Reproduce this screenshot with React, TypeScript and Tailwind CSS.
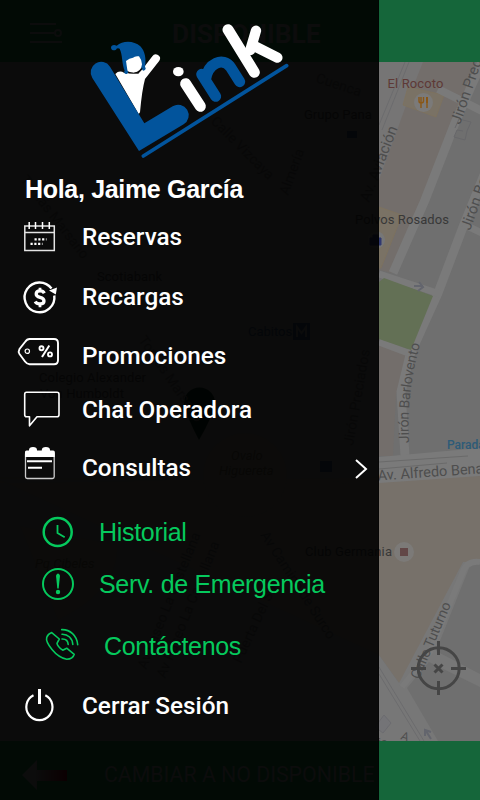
import type { ReactNode } from "react";

function StreetMap() {
  return (
    <svg viewBox="0 62 480 679" className="block h-[679px] w-full" fontFamily="Roboto, sans-serif">
      <rect y="62" width="480" height="679" fill="#6f6f6f" />
      {/* blocks */}
      <path d="M379 62H476L392 273L379 270Z" fill="#736e6b" />
      <path d="M379 62H423L408 100L379 180Z" fill="#767575" />
      <path d="M408 87L444 95L436 117L403 105Z" fill="#7a7265" stroke="#80725c" strokeWidth=".7" />
      <path d="M379 207L402 215L381 268H379Z" fill="#7a7265" stroke="#80725c" strokeWidth=".7" />
      <path d="M379 345L409 355L396 395L393 456H379Z" fill="#736e6b" />
      <path d="M0 483L480 476V562L463 562L428 655L399 683L379 655L0 480Z" fill="#77716a" />
      <path d="M379 655L399 683L463 562H480V741H379Z" fill="#777" />
      <path d="M469 568Q472 563 480 564V674L436 651Z" fill="#6f6f6f" />
      <path d="M407 688L429 662L480 687V741H438Z" fill="#6f6f6f" />
      <path d="M384 715L391 723L383 733L375 727Z" fill="#747477" stroke="#6c6c70" />
      {/* roads */}
      <g fill="none" stroke="#7a7a7a" strokeWidth="9">
        <path d="M485 55L455 123L425 200L393 273" />
        <path d="M438 89L484 112" strokeWidth="8" />
        <path d="M484 175L463 227L438 293L410 355L401 392L405 456" />
        <path d="M463 224L484 234M379 274L440 294M379 342L411 354" strokeWidth="7" />
        <path d="M480 562Q466 560 462 574L430 652L402 687" strokeWidth="6" />
      </g>
      <path d="M379 457L480 448V476L379 483Z" fill="#7a7a7a" />
      <path d="M379 462L468 456M379 469L447 463" stroke="#6a6a6a" />
      <path d="M405 62L379 125M409 62L382 130M379 667L424 741M379 674L420 741" stroke="#6c6c6e" fill="none" />
      <path d="M384 278L433 296L411 350L379 339V282Z" fill="#637055" />
      <path d="M0 478L379 483" stroke="#7a7265" />
      <path d="M414 286H423M419 282L423 287L418 291M431 739L426 731M425 736L425 730L431 732" stroke="#63656d" strokeWidth="2" fill="none" />
      <path d="M455 128L459 119L471 122L467 131L465 140L454 137L457 130L463 131" fill="none" stroke="#67676a" />
      {/* places */}
      <circle cx="423.500" cy="102.500" r="9.500" fill="#7b7a79" />
      <path d="M419 97V101Q419 103 421 103V108M421 97V103M423.500 97V101Q423.500 103 421 103M427 97V108" fill="none" stroke="#8a5716" strokeWidth="1.400" />
      <path d="M426 97H428V103H426Z" fill="#8a5716" />
      <circle cx="376" cy="240" r="9" fill="#777" />
      <path d="M370 238H381V245H370ZM373 238V235H378V238" fill="#303971" stroke="#303971" />
      <circle cx="404" cy="552" r="10" fill="#7c7a78" />
      <path d="M400 548H408V556H400Z" fill="#624747" />
      <path d="M184 403A15.500 15.500 0 0 1 215 403Q212 418 199 440Q187 418 184 403Z" fill="#092415" />
      <circle cx="245" cy="475" r="42" fill="#77716a" />
      <path d="M293 323H310V340H293ZM320 461H332V472H320ZM347 131H357V138H347Z" fill="#2b3f5c" />
      <path d="M297 337V327L301.500 333L306 327V337" fill="none" stroke="#6f6f6f" strokeWidth="2" />
      <path d="M20 526L58 620Q120 590 117 545Z" fill="#77716a" />
      <g fontSize="13">
        <text x="387.500" y="88" fill="#5e3936" textLength="56">El Rocoto</text>
        <text x="355" y="224" fill="#383838" textLength="94">Polvos Rosados</text>
        <text x="305" y="556" fill="#383838" textLength="87">Club Germania</text>
        <text x="447" y="449" fill="#2d5b78" fontSize="12" fontWeight="500">Parada</text>
        <text x="304" y="119" fill="#383838">Grupo Pana</text>
        <text x="97" y="281" fill="#383838" textLength="65">Scotiabank</text>
        <text x="39" y="382" fill="#383838" textLength="107">Colegio Alexander</text>
        <text x="40" y="397.500" fill="#383838" textLength="84">Von Humboldt</text>
        <text x="248" y="336" fill="#2b3f5c">Cabitos</text>
        <g fontStyle="italic" fill="#514938">
          <text x="231" y="460">Ovalo</text>
          <text x="219" y="475">Higuereta</text>
          <text x="35" y="568">Pq Cibeles</text>
        </g>
      </g>
      <path id="barlovento" d="M409 443Q406 390 422 338" fill="none" />
      <g fill="#4e4e4e" fontSize="15">
        <text transform="translate(369 203) rotate(-69)" textLength="80">Av. Aviación</text>
        <text transform="translate(460 125) rotate(-71)">Jirón Preciados</text>
        <text transform="translate(470 231) rotate(-70)">Jirón Barlovento</text>
        <text fontSize="14"><textPath href="#barlovento" textLength="100">Jirón Barlovento</textPath></text>
        <text transform="translate(378 480.500) rotate(-4)" fontSize="14.500">Av. Alfredo Benavides</text>
        <text transform="translate(419 680) rotate(-67)" fontSize="14" textLength="82">Calle Tuturno</text>
        <text x="378" y="747" fontSize="12">is</text>
        <text transform="translate(400 739) rotate(20)" fontSize="12">A</text>
      </g>
      <g fill="#4e4e4e" fontSize="14">
        <text transform="translate(210 122) rotate(45)">Calle Vizcaya</text>
        <text transform="translate(288 196) rotate(-70)">Almería</text>
        <text transform="translate(315 82) rotate(18)">Cuenca</text>
        <text transform="translate(353 446) rotate(-80)">Jirón Preciados</text>
        <text transform="translate(146 670) rotate(-68)">Av Paseo La Castellana</text>
        <text transform="translate(165 679) rotate(-68)">Av Paseo La Castellana</text>
        <text transform="translate(260 535) rotate(57)">Av Camino de Surco</text>
        <text transform="translate(241 664) rotate(-65)">Puerta Del Sol</text>
        <text transform="translate(138 340) rotate(55)">Tomás Marsano</text>
        <text transform="translate(20 180) rotate(52)">Tomás Marsano</text>
      </g>
      {/* locate control */}
      <g fill="none" stroke="#454545" strokeWidth="3">
        <circle cx="438.700" cy="668.300" r="20.500" />
        <path d="M438.500 641V655M438.500 681V695M411 668.500H426M451 668.500H466" />
        <path d="M434.500 664.500L442.500 672.500M442.500 664.500L434.500 672.500" strokeWidth="3" />
      </g>
    </svg>
  );
}

function LinkLogo() {
  return (
    <svg viewBox="-210 0 1137 507" className="block h-[169px] w-[379px] shrink-0">
      <path d="M136 222Q148 209 163 219L205 221L220 204L247 169A12 12 0 0 1 268 182L225 237Q216 270 210 337L206 342Z" fill="#fff" />
      <path d="M67 234A31 31 0 0 1 120 200L223 370L308 319A31 31 0 0 1 341 373L207 453Z" fill="#02549c" />
      <path d="M123 143C123 136 131 133 140 137C158 121 192 121 211 139C225 153 229 177 225 201A6 6 0 1 1 217 210L205 180L170 185L174 214A6 6 0 1 1 164 212C155 192 158 164 149 146Q141 143 138 149C132 153 124 151 123 143Z" fill="#02549c" />
      <path d="M168 183Q178 174 189 173Q195 167 207 169Q216 181 216 193Q214 215 191 218Q172 216 172 210Z" fill="#fff" />
      <path d="M176 219Q208 224 217 205" stroke="#0b0b0b" strokeWidth="2" fill="none" />
      <ellipse cx="325" cy="215" rx="16" ry="14" fill="#fff" />
      <g fill="none" strokeLinecap="round" strokeLinejoin="round" strokeWidth="33">
        <path d="M347 251L391 319" stroke="#fff" />
        <path d="M395 223L437 289M407 237C414 190 459 169 482 202L509 245" stroke="#02549c" />
        <path d="M474 89L553 217" stroke="#fff" />
        <path d="M558 92L541 150" stroke="#fff" strokeWidth="31" />
        <path d="M551 137L622 173" stroke="#fff" strokeWidth="31" />
      </g>
      <path d="M220 468L650 197" stroke="#02549c" strokeWidth="11" strokeLinecap="round" />
    </svg>
  );
}

function Icon({ children, className }: { children: ReactNode; className: string }) {
  return (
    <svg
      viewBox="0 0 40 40"
      className={"h-10 w-10 shrink-0 overflow-visible " + className}
      fill="none"
      stroke="currentColor"
      strokeWidth="2"
    >
      {children}
    </svg>
  );
}

// Each drawing sits in a 40px box centred on its row.
const icons = {
  calendar: (
    <g strokeWidth="1.500" stroke="#e4e4e4">
      <path d="M4.800 9H34.300V33.500H4.800ZM4.800 15.500H34.300" />
      <path d="M9.200 5V12M15.500 5V12M22.500 5V12M29.300 5V12" stroke="#fff" />
      <path d="M14.500 22.300H26.500M10.500 26.800H22.500" strokeWidth="2.200" strokeDasharray="2.200 1.600" stroke="#fff" />
    </g>
  ),
  recharge: (
    <g>
      <path d="M34.300 18.500A14.900 14.900 0 1 1 31.500 11.500" strokeWidth="2.400" />
      <path d="M29 13.500L37 10.500L35.800 17.500Z" fill="currentColor" stroke="none" />
      <path d="M24.300 16.200Q23 13.800 20 13.900Q16.200 14 16.200 16.900Q16.200 19.300 20 20.300Q24 21.300 24 23.900Q24 26.800 20 26.900Q16.500 26.900 15.200 24.500" strokeWidth="3.300" />
      <path d="M20 10.700V14M20 27V30.300" strokeWidth="2.800" />
    </g>
  ),
  tag: (
    <g strokeWidth="1.900">
      <path d="M9.500 3H34Q38 3 38 7V24.200Q38 28.200 34 28.200H9.500Q7 28.200 5 25.500L-.500 18Q-2 15.600 -.500 13L5 6Q7 3 9.500 3Z" />
      <circle cx="7.300" cy="15.200" r="2.200" strokeWidth="1.200" />
      <path d="M29.300 9.500L22 21" strokeWidth="2" />
      <circle cx="21.500" cy="12.200" r="2" strokeWidth="1.900" />
      <circle cx="30" cy="18.400" r="2" strokeWidth="1.900" />
    </g>
  ),
  chat: (
    <path d="M6.500 2.200H37Q39 2.200 39 4.200V24.700Q39 26.700 37 26.700H17L9.500 35.800V26.700H6.500Q4.700 26.700 4.700 24.700V4.200Q4.700 2.200 6.500 2.200Z" strokeWidth="1.600" strokeLinejoin="round" />
  ),
  notes: (
    <g>
      <rect x="5.500" y="4" width="28.700" height="26.500" rx="1.800" strokeWidth="1.300" stroke="#ccc" />
      <path d="M5 9V4Q5 2.500 6.500 2.500H33.200Q34.800 2.500 34.800 4V9Z" fill="currentColor" stroke="none" />
      <path d="M9 4V2Q9 -1 13 -1Q17 -1 17 2V4ZM21.800 4V2Q21.800 -1 25.900 -1Q30 -1 30 2V4Z" fill="currentColor" stroke="none" />
      <path d="M7 13.300H32M8 19.700H22" strokeWidth="2" />
    </g>
  ),
  clock: (
    <g>
      <circle cx="19.700" cy="20" r="14" strokeWidth="2.500" />
      <path d="M19.500 13V21L26.700 25.300" strokeWidth="1.800" />
    </g>
  ),
  alert: (
    <g>
      <circle cx="20" cy="20" r="15" />
      <path d="M18 11.500Q20 7.500 22 11.500L20.700 24.500H19.300Z" fill="currentColor" stroke="none" />
      <circle cx="20" cy="28" r="2.200" fill="currentColor" stroke="none" />
    </g>
  ),
  phone: (
    <g strokeWidth="1.600" strokeLinejoin="round" strokeLinecap="round">
      <path d="M13.700 6.600L21.300 13L19 17.300Q19.500 20.500 24.700 24.200L28.700 22.200L36.200 28.300Q35 33 28.700 33.300Q20.500 31.500 14 23.500Q7.500 15.500 8.700 11.500Q10 8 13.700 6.600Z" />
      <path d="M23.700 3.600C32 3.300 39 9.500 39.700 18.700M24 8.200C30 8 34.500 12.500 34.800 18.500M24 13C28 12.800 30 15 30.200 18.500" />
    </g>
  ),
  power: (
    <g strokeWidth="2.200">
      <path d="M13.500 9.300A13.100 13.100 0 1 0 25.300 9.300" />
      <path d="M19.500 3V18" strokeWidth="3" />
    </g>
  ),
};

type ItemProps = { icon: ReactNode; label: string; className: string; text?: string; children?: ReactNode };

function MenuItem({ icon, label, className, text = "", children }: ItemProps) {
  return (
    <a href="#" className={"flex h-10 shrink-0 items-center pl-[20px] font-medium text-white " + className}>
      <Icon className="mr-[22px]">{icon}</Icon>
      <span className={"font-[Roboto,sans-serif] text-[24.3px] leading-10 whitespace-nowrap " + text}>{label}</span>
      {children}
    </a>
  );
}

function SubItem({ icon, label, className, text = "" }: ItemProps) {
  return (
    <a href="#" className={"flex h-10 shrink-0 items-center pl-[38px] text-[#05c95d] " + className}>
      <Icon className="mr-[21px]">{icon}</Icon>
      <span className={"font-['Liberation_Sans',sans-serif] text-[25px] leading-10 tracking-[-0.3px] whitespace-nowrap " + text}>{label}</span>
    </a>
  );
}

export default function App() {
  return (
    <div className="relative h-[800px] w-[480px] overflow-hidden bg-[#15663a]">
      <header className="flex h-[62px] items-center pt-[6px] pl-[30px] font-[Roboto,sans-serif] text-[#777]">
        <svg viewBox="0 0 34 24" className="h-6 w-[34px]" fill="none" stroke="currentColor" strokeWidth="2">
          <path d="M0 2H26M0 11H24M0 20H32" />
          <circle cx="28" cy="11" r="3" />
        </svg>
        <h1 className="ml-[108px] text-[26.400px] leading-none font-bold">DISPONIBLE</h1>
      </header>
      <StreetMap />
      <footer className="flex h-[59px] items-center pt-2 pl-[22px] font-[Roboto,sans-serif] text-[#777]">
        <svg viewBox="0 0 46 30" className="h-[30px] w-[46px]">
          <defs>
            <linearGradient id="arrow">
              <stop offset=".3" stopColor="#777" />
              <stop offset="1" stopColor="#700010" />
            </linearGradient>
          </defs>
          <path d="M0 15L15 0V10H45V21H15V30Z" fill="url(#arrow)" />
        </svg>
        <span className="ml-[36px] text-[21.300px] whitespace-nowrap">CAMBIAR A NO DISPONIBLE</span>
      </footer>

      <aside className="absolute inset-y-0 left-0 flex w-[379px] flex-col border-r border-black/30 bg-black/90">
        <LinkLogo />
        <h2 className="h-10 shrink-0 pl-[25px] font-['Liberation_Sans',sans-serif] text-[25px] leading-10 font-bold tracking-[-0.32px] whitespace-nowrap text-white">
          Hola, Jaime García
        </h2>
        <nav className="flex flex-col">
          <MenuItem className="mt-[8px]" icon={icons.calendar} label="Reservas" />
          <MenuItem className="mt-[20px]" icon={icons.recharge} label="Recargas" />
          <MenuItem className="mt-[19px]" icon={icons.tag} label="Promociones" />
          <MenuItem className="mt-[14px]" icon={icons.chat} label="Chat Operadora" />
          <MenuItem className="mt-[18px]" icon={icons.notes} label="Consultas">
            <svg viewBox="0 0 14 22" className="mr-[10px] ml-auto h-[22px] w-[14px]" fill="none" stroke="currentColor" strokeWidth="2">
              <path d="M2 3L12 12L2 21" />
            </svg>
          </MenuItem>
          <SubItem className="mt-[24px]" icon={icons.clock} label="Historial" />
          <SubItem className="mt-[12px]" icon={icons.alert} label="Serv. de Emergencia" />
          <SubItem className="mt-[22px]" icon={icons.phone} label="Contáctenos" text="pl-[5px]" />
          <MenuItem className="mt-[20px]" icon={icons.power} label="Cerrar Sesión" />
        </nav>
      </aside>
    </div>
  );
}
